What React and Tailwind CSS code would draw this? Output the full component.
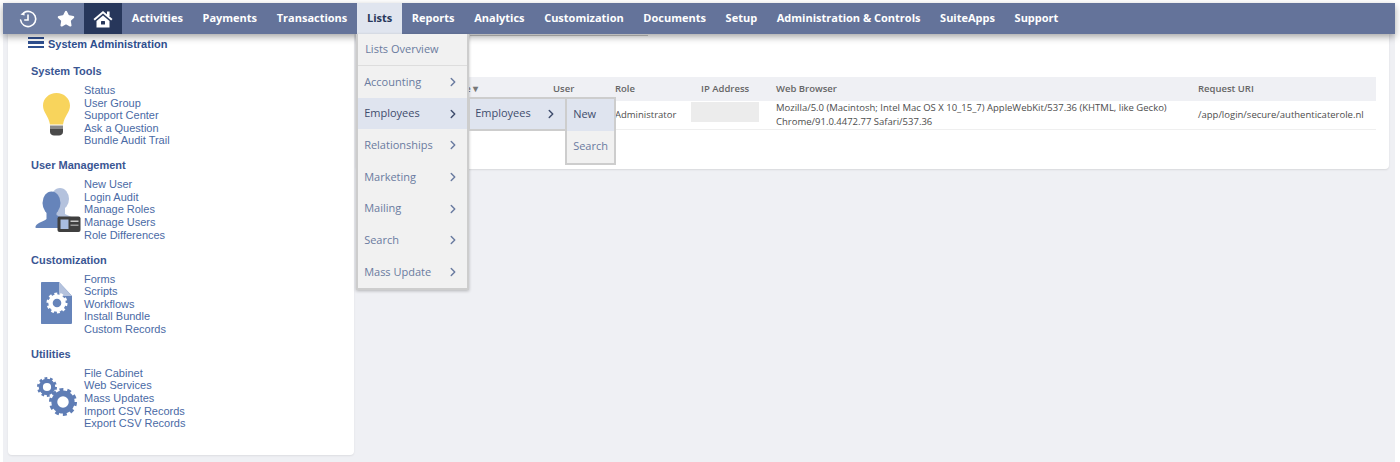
import { ChevronRight, Star } from 'lucide-react'

const navItems = ['Activities', 'Payments', 'Transactions', 'Lists', 'Reports', 'Analytics', 'Customization', 'Documents', 'Setup', 'Administration & Controls', 'SuiteApps', 'Support']

const listItems = ['Accounting', 'Employees', 'Relationships', 'Marketing', 'Mailing', 'Search', 'Mass Update']

const sections = [
  { title: 'System Tools', icon: BulbIcon, links: ['Status', 'User Group', 'Support Center', 'Ask a Question', 'Bundle Audit Trail'] },
  { title: 'User Management', icon: UsersIcon, links: ['New User', 'Login Audit', 'Manage Roles', 'Manage Users', 'Role Differences'] },
  { title: 'Customization', icon: DocGearIcon, links: ['Forms', 'Scripts', 'Workflows', 'Install Bundle', 'Custom Records'] },
  { title: 'Utilities', icon: GearsIcon, links: ['File Cabinet', 'Web Services', 'Mass Updates', 'Import CSV Records', 'Export CSV Records'] },
]

function HistoryIcon() {
  return (
    <svg width="20" height="20" viewBox="0 0 20 20" fill="none" stroke="white" strokeWidth="1.6" strokeLinecap="round">
      <path d="M6 3.600A7.600 7.600 0 1 1 2.600 11" />
      <path d="M2.500 5.400 6.400 2.400 6.600 6.600" fill="white" stroke="none" />
      <path d="M10 6v5H6.800" />
    </svg>
  )
}

function HomeIcon() {
  return (
    <svg width="20" height="18" viewBox="0 0 20 18">
      <path d="M0.500 9 10 1l9.500 8-1.300 1.500L10 3.600 1.800 10.500z" fill="white" />
      <rect x="14" y="1.500" width="2.600" height="4.500" fill="white" />
      <path d="M3.500 11 10 5.400 16.500 11v6.500h-13z" fill="white" />
      <rect x="8" y="11" width="4" height="3.500" rx="0.500" fill="#27375b" />
    </svg>
  )
}

function BulbIcon() {
  return (
    <svg width="53" height="63" viewBox="0 0 53 63">
      <path d="M25.500 9C18 9 12 14.500 12 21.500c0 7 5.500 10 7 19h13c1.500-9 7-12 7-19C39 14.500 33 9 25.500 9z" fill="#f8d45c" />
      <path d="M19 41.500h13v3.500H19z" fill="#8a8a8a" />
      <path d="M19 45h13v3c0 2-2 3.500-4 3.500h-5c-2 0-4-1.500-4-3.500z" fill="#4a4a4a" />
    </svg>
  )
}

function UsersIcon() {
  return (
    <svg width="53" height="63" viewBox="0 0 53 63">
      <ellipse cx="29" cy="21" rx="9" ry="11" fill="#b4c2dd" />
      <path d="M24 30h10v6c3 2 8 3 11 5v5H24z" fill="#b4c2dd" />
      <ellipse cx="20.500" cy="25" rx="9" ry="11.500" fill="#6684ba" />
      <path d="M15.500 33h10v4c3 2 6 3 8 5v8H5c-.500 0-.800-1-.300-2 1.800-3.500 9-5 10.800-7z" fill="#6684ba" />
      <rect x="26.500" y="38.500" width="23" height="15.500" rx="2" fill="#3f3f3f" />
      <rect x="29.500" y="41.500" width="8" height="9.500" fill="#a9bde0" />
      <rect x="39.500" y="42.500" width="8" height="1.500" fill="#c8c8c8" />
      <rect x="39.500" y="46.500" width="8" height="1.500" fill="#9a9a9a" />
    </svg>
  )
}

function Gear({ cx, cy, size, fill = '#5f7db5' }) {
  const teethRadius = size * 0.86
  const dash = (2 * Math.PI * teethRadius) / 20
  return (
    <g fill="none" stroke={fill}>
      <circle cx={cx} cy={cy} r={teethRadius} strokeWidth={size * 0.28} strokeDasharray={`${dash} ${dash}`} />
      <circle cx={cx} cy={cy} r={size * 0.62} strokeWidth={size * 0.42} />
    </g>
  )
}

function DocGearIcon() {
  return (
    <svg width="53" height="63" viewBox="0 0 53 63">
      <path d="M11 9h17l13 14v27c0 .800-.700 1-1.500 1H11c-.800 0-1-.200-1-1V10c0-.500.300-1 1-1z" fill="#6684ba" />
      <path d="M28 9l13 14H28z" fill="#b4c2dd" />
      <Gear cx={26} cy={30} size={10.500} fill="#ffffff" />
    </svg>
  )
}

function GearsIcon() {
  return (
    <svg width="53" height="63" viewBox="0 0 53 63">
      <Gear cx={16} cy={20} size={10} />
      <Gear cx={32} cy={35} size={14} />
    </svg>
  )
}

function MenuChevron({ dark }) {
  return <ChevronRight className={dark ? 'w-[14px] h-[14px] text-[#3f4d6d]' : 'w-[14px] h-[14px] text-[#6a7ba0]'} strokeWidth={2.5} />
}

function ListsMenu() {
  return (
    <div className="absolute top-full left-[-1px] z-30 w-[113px] bg-[#f1f1f1] border-2 border-[#cdcdcd] border-t-0 font-['Open_Sans',sans-serif] text-[11px] font-normal tracking-normal shadow-[0_1px_3px_rgba(0,0,0,0.25)]">
      <div className="h-[32px] flex items-center pl-[7px] text-[#6a7ba0] border-b border-[#dddddd]">Lists Overview</div>
      {listItems.map((item) =>
        item === 'Employees' ? (
          <div key={item} className="relative h-[31.700px] flex items-center justify-between pl-[6px] pr-[7px] bg-[#dfe4ef] text-[#3f4d6d]">
            {item}
            <MenuChevron dark />
            <EmployeesMenu />
          </div>
        ) : (
          <div key={item} className="h-[31.700px] flex items-center justify-between pl-[6px] pr-[7px] text-[#6a7ba0]">
            {item}
            <MenuChevron />
          </div>
        )
      )}
    </div>
  )
}

function EmployeesMenu() {
  return (
    <div className="absolute left-[110px] top-[-1px] w-[98px] h-[34px] flex items-center justify-between pl-[5px] pr-[8px] bg-[#dfe4ef] border-2 border-r-0 border-[#cdcdcd] text-[#3f4d6d]">
      Employees
      <MenuChevron dark />
      <div className="absolute left-[95px] top-[-2px] w-[51px] bg-[#f1f1f1] border-2 border-[#cdcdcd]">
        <div className="h-[32px] flex items-center pl-[6px] bg-[#dfe4ef] text-[#3f4d6d]">New</div>
        <div className="h-[32px] flex items-center pl-[6px] text-[#6a7ba0]">Search</div>
      </div>
    </div>
  )
}

function NavBar() {
  return (
    <nav className="relative z-20 h-[31px] flex items-stretch bg-[#64739a] shadow-[0_3px_7px_rgba(0,0,0,0.35)] font-['Open_Sans',sans-serif] text-[11px] font-bold text-white">
      <div className="w-[44px] flex items-center justify-center bg-[#6d7da2] pl-[6px]"><HistoryIcon /></div>
      <div className="w-[37px] flex items-center justify-center bg-[#6d7da2]"><Star className="w-[18px] h-[18px]" fill="white" stroke="white" /></div>
      <div className="w-[38px] flex items-center justify-center bg-[#27375b]"><HomeIcon /></div>
      {navItems.map((item) =>
        item === 'Lists' ? (
          <div key={item} className="relative flex items-center px-[9.800px] bg-[#e0e5ef] text-[#27375b]">
            {item}
            <ListsMenu />
          </div>
        ) : (
          <div key={item} className="flex items-center px-[9.800px]">{item}</div>
        )
      )}
    </nav>
  )
}

function AdminPanel() {
  return (
    <aside className="w-[346px] h-[421px] ml-[5px] bg-white rounded-b-[4px] shadow-[0_1px_2px_rgba(0,0,0,0.08)] font-['Liberation_Sans',Arial,sans-serif] text-[11px] text-[#4a6aa5]">
      <div className="flex items-center gap-[4px] pl-[20px] h-[21px]">
        <div className="w-[16px] -mt-[4px] flex flex-col gap-[2px]">
          <span className="h-[2.500px] bg-[#2f4f8f]" />
          <span className="h-[2.500px] bg-[#2f4f8f]" />
          <span className="h-[2.500px] bg-[#2f4f8f]" />
        </div>
        <span className="font-bold text-[#2f4f8f] text-[11px]">System Administration</span>
      </div>
      <div className="pl-[23px] pt-[9px] flex flex-col gap-[11.300px]">
        {sections.map((section) => (
          <section key={section.title}>
            <h3 className="h-[14px] leading-[14px] font-bold text-[#3a5693]">{section.title}</h3>
            <div className="flex mt-[6px]">
              <div className="w-[53px] h-[63px] shrink-0"><section.icon /></div>
              <ul className="leading-[12.600px]">
                {section.links.map((link) => <li key={link}>{link}</li>)}
              </ul>
            </div>
          </section>
        ))}
      </div>
    </aside>
  )
}

function LoginTable() {
  return (
    <main className="w-[1033px] h-[135px] ml-[2px] bg-white rounded-b-[4px] shadow-[0_1px_2px_rgba(0,0,0,0.1)] pl-[14px] pr-[13px] pt-[1px] font-['Open_Sans',sans-serif] text-[9.500px] text-[#4d4d4d]">
      <div className="ml-[100px] w-[178px] h-[1px] mb-[41px] bg-[#c8c8c8]" />
      <div className="grid grid-cols-[183px_62px_76px_85px_422px_178px] h-[24px] items-center bg-[#eff0f4] font-semibold text-[#666666]">
        <span className="pl-[79px] text-[#777777]">Date ▾</span>
        <span>User</span>
        <span>Role</span>
        <span className="pl-[10px]">IP Address</span>
        <span>Web Browser</span>
        <span>Request URI</span>
      </div>
      <div className="grid grid-cols-[183px_62px_76px_85px_422px_178px] h-[29px] items-center border-b border-[#efefef]">
        <span />
        <span />
        <span>Administrator</span>
        <span className="w-[68px] h-[20px] mb-[6px] bg-[#ececec]" />
        <span className="leading-[14px]">
          Mozilla/5.0 (Macintosh; Intel Mac OS X 10_15_7) AppleWebKit/537.36 (KHTML, like Gecko)
          <br />
          Chrome/91.0.4472.77 Safari/537.36
        </span>
        <span>/app/login/secure/authenticaterole.nl</span>
      </div>
    </main>
  )
}

export default function App() {
  return (
    <div className="h-[462px] w-[1400px] overflow-hidden bg-white pl-[3px] pt-[3px] pr-[5px]">
      <div className="h-[459px] bg-[#eff0f4]">
        <NavBar />
        <div className="flex items-start">
          <AdminPanel />
          <LoginTable />
        </div>
      </div>
    </div>
  )
}
